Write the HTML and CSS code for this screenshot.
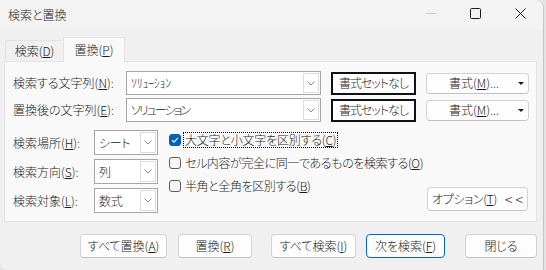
FILE: index.html
```html
<!DOCTYPE html>
<html>
<head>
<meta charset="utf-8">
<title>検索と置換</title>
<link rel="stylesheet" href="styles.css">
</head>
<body>

<div class="dialog">
  <div class="titlebar">
    <span class="title">検索と置換</span>
    <div class="caption">
      <span class="cap-btn"><svg width="10" height="10" viewBox="0 0 10 10"><path d="M0 5.5H10" stroke="#c8c8c8" stroke-width="1"/></svg></span>
      <span class="cap-btn"><svg width="11" height="11" viewBox="0 0 11 11"><rect x="0.5" y="0.5" width="10" height="10" rx="1" fill="none" stroke="#1b1b1b" stroke-width="1"/></svg></span>
      <span class="cap-btn"><svg width="11" height="11" viewBox="0 0 11 11"><path d="M0.5 0.5L10.5 10.5M10.5 0.5L0.5 10.5" stroke="#1b1b1b" stroke-width="1"/></svg></span>
    </div>
  </div>

  <div class="tabs">
    <div class="tab">検索(<u>D</u>)</div>
    <div class="tab active">置換(<u>P</u>)</div>
  </div>

  <div class="panel">
    <div class="row">
      <label class="lbl">検索する文字列(<u>N</u>):</label>
      <div class="combo wide">
        <span class="val">ｿﾘｭｰｼｮﾝ</span>
        <span class="arrow"><svg width="8" height="5" viewBox="0 0 8 5"><path d="M0.5 0.5L4 4L7.5 0.5" fill="none" stroke="#8a8a8a"/></svg></span>
      </div>
      <div class="fmtbox">書式セットなし</div>
      <div class="btn fmtbtn"><span>書式(<u>M</u>)...</span><span class="tri"></span></div>
    </div>
    <div class="row">
      <label class="lbl">置換後の文字列(<u>E</u>):</label>
      <div class="combo wide">
        <span class="val kana">ソリューション</span>
        <span class="arrow"><svg width="8" height="5" viewBox="0 0 8 5"><path d="M0.5 0.5L4 4L7.5 0.5" fill="none" stroke="#8a8a8a"/></svg></span>
      </div>
      <div class="fmtbox">書式セットなし</div>
      <div class="btn fmtbtn"><span>書式(<u>M</u>)...</span><span class="tri"></span></div>
    </div>

    <div class="opts">
      <div class="opt-grid">
        <label class="lbl">検索場所(<u>H</u>):</label>
        <div class="combo small">
          <span class="val">シート</span>
          <span class="arrow"><svg width="8" height="5" viewBox="0 0 8 5"><path d="M0.5 0.5L4 4L7.5 0.5" fill="none" stroke="#8a8a8a"/></svg></span>
        </div>
        <label class="lbl">検索方向(<u>S</u>):</label>
        <div class="combo small">
          <span class="val">列</span>
          <span class="arrow"><svg width="8" height="5" viewBox="0 0 8 5"><path d="M0.5 0.5L4 4L7.5 0.5" fill="none" stroke="#8a8a8a"/></svg></span>
        </div>
        <label class="lbl">検索対象(<u>L</u>):</label>
        <div class="combo small">
          <span class="val">数式</span>
          <span class="arrow"><svg width="8" height="5" viewBox="0 0 8 5"><path d="M0.5 0.5L4 4L7.5 0.5" fill="none" stroke="#8a8a8a"/></svg></span>
        </div>
      </div>

      <div class="checks">
        <div class="check">
          <span class="box on"><svg width="12" height="12" viewBox="0 0 12 12"><path d="M3 6.2L5 8.2L9 3.9" fill="none" stroke="#fff" stroke-width="1.1"/></svg></span>
          <span class="text focus">大文字と小文字を区別する(<u>C</u>)</span>
        </div>
        <div class="check">
          <span class="box"></span>
          <span class="text">セル内容が完全に同一であるものを検索する(<u>O</u>)</span>
        </div>
        <div class="check">
          <span class="box"></span>
          <span class="text">半角と全角を区別する(<u>B</u>)</span>
        </div>
      </div>

      <div class="btn optbtn">オプション(<u>T</u>)<span class="lt">&lt; &lt;</span></div>
    </div>
  </div>

  <div class="actions">
    <div class="btn b-all-rep">すべて置換(<u>A</u>)</div>
    <div class="btn b-rep">置換(<u>R</u>)</div>
    <div class="btn b-all-find">すべて検索(<u>I</u>)</div>
    <div class="btn b-next default">次を検索(<u>F</u>)</div>
    <div class="btn b-close">閉じる</div>
  </div>
</div>

</body>
</html>
```

FILE: styles.css
```css
body {
  margin: 0;
  background: #e4e4e4;
  font-family: "Noto Sans CJK JP", "Noto Sans", sans-serif;
  font-size: 12px;
  font-weight: 300;
  line-height: 14px;
  color: #1b1b1b;
  font-feature-settings: "palt";
}

u {
  text-decoration: underline;
  text-underline-offset: 1px;
}

.dialog {
  width: 544px;
  height: 270px;
  box-sizing: border-box;
  background: #f0f0f0;
  border-right: 1px solid #c4c4c4;
  border-radius: 0 8px 0 8px;
  overflow: hidden;
}

/* title bar */
.titlebar {
  height: 29px;
  display: flex;
  align-items: center;
  padding-left: 8px;
  background: #f3f3f3;
}

.caption {
  margin-left: auto;
  display: flex;
  align-self: flex-start;
}

.cap-btn {
  width: 45px;
  height: 26px;
  display: flex;
  align-items: center;
  justify-content: center;
}

/* tabs */
.tabs {
  display: flex;
  align-items: flex-end;
  height: 24px;
  padding: 8px 0 0 5px;
}

.tab {
  height: 21px;
  width: 58px;
  box-sizing: border-box;
  display: flex;
  align-items: center;
  justify-content: center;
  border: 1px solid #e3e3e3;
  border-right: none;
  border-bottom: none;
  background: #f0f0f0;
}

.tab.active {
  height: 25px;
  width: 62px;
  margin-bottom: -1px;
  border-right: 1px solid #e3e3e3;
  background: #f9f9f9;
  position: relative;
  z-index: 1;
  padding-bottom: 1px;
}

/* group panel */
.panel {
  width: 533px;
  margin-left: 4px;
  box-sizing: border-box;
  background: #f9f9f9;
  border: 1px solid #e3e3e3;
  padding: 9px 8px 8px 8px;
}

.row {
  display: flex;
  align-items: center;
  height: 24px;
  margin-bottom: 3px;
}

.lbl {
  display: flex;
  align-items: center;
}

.row .lbl {
  width: 113px;
  flex-shrink: 0;
}

.combo {
  display: flex;
  height: 24px;
  box-sizing: border-box;
  border: 1px solid #a6a6a6;
  background: #fff;
  padding: 1px;
  flex-shrink: 0;
}

.combo.wide {
  width: 195px;
}

.combo.small {
  width: 64px;
  height: 25px;
}

.combo .val {
  flex: 1;
  display: flex;
  align-items: center;
  padding-left: 3px;
  white-space: nowrap;
  letter-spacing: -0.3px;
}

.combo .val.kana {
  letter-spacing: -2px;
}

.combo .arrow {
  width: 16px;
  box-sizing: border-box;
  border: 1px solid #dcdcdc;
  display: flex;
  align-items: center;
  justify-content: center;
}

.fmtbox {
  width: 85px;
  height: 23px;
  margin-left: 10px;
  box-sizing: border-box;
  border: 2px solid #111;
  background: #fff;
  display: flex;
  align-items: center;
  justify-content: center;
  flex-shrink: 0;
  letter-spacing: -1px;
}

.btn {
  height: 24px;
  box-sizing: border-box;
  background: #fdfdfd;
  border: 1px solid #d3d3d3;
  border-bottom-color: #c2c2c2;
  border-radius: 4px;
  display: flex;
  align-items: center;
  justify-content: center;
  white-space: nowrap;
  flex-shrink: 0;
}

.fmtbtn {
  width: 103px;
  height: 21px;
  margin-left: 10px;
  justify-content: flex-start;
  padding-left: 22px;
}

.tri {
  margin-left: auto;
  margin-right: 4px;
  width: 0;
  height: 0;
  border-left: 3px solid transparent;
  border-right: 3px solid transparent;
  border-top: 3px solid #1b1b1b;
}

/* options area */
.opts {
  display: flex;
  margin-top: 8px;
}

.opt-grid {
  display: grid;
  grid-template-columns: 81px 64px;
  grid-auto-rows: 25px;
  row-gap: 4px;
}

.checks {
  flex: 1;
  margin-left: 11px;
  display: flex;
  flex-direction: column;
  gap: 3px;
}

.check {
  height: 20px;
  display: flex;
  align-items: center;
}

.box {
  width: 12px;
  height: 12px;
  box-sizing: border-box;
  border: 1px solid #5d5d5d;
  border-radius: 3px;
  background: #f6f6f6;
  margin-right: 2px;
  display: flex;
}

.box.on {
  background: #005fb8;
  border-color: #005fb8;
}

.box svg {
  margin: -1px;
}

.check .text {
  border: 1px dotted transparent;
  padding: 0 1px;
  white-space: nowrap;
  letter-spacing: -0.4px;
}

.check .text.focus {
  border-color: #000;
  letter-spacing: -0.2px;
}

.optbtn {
  width: 101px;
  align-self: flex-end;
  margin-bottom: 2px;
  letter-spacing: -0.3px;
}

.optbtn .lt {
  margin-left: 8px;
  font-size: 14px;
  letter-spacing: 0;
}

/* bottom buttons */
.actions {
  display: flex;
  justify-content: flex-end;
  margin-top: 12px;
  padding-right: 6px;
}

.b-all-rep { width: 87px; }
.b-rep { width: 74px; margin-left: 11px; }
.b-all-find { width: 85px; margin-left: 19px; }
.b-next { width: 79px; margin-left: 10px; }
.b-close { width: 72px; margin-left: 20px; }

.btn.default {
  border-color: #0067c0;
}
```
